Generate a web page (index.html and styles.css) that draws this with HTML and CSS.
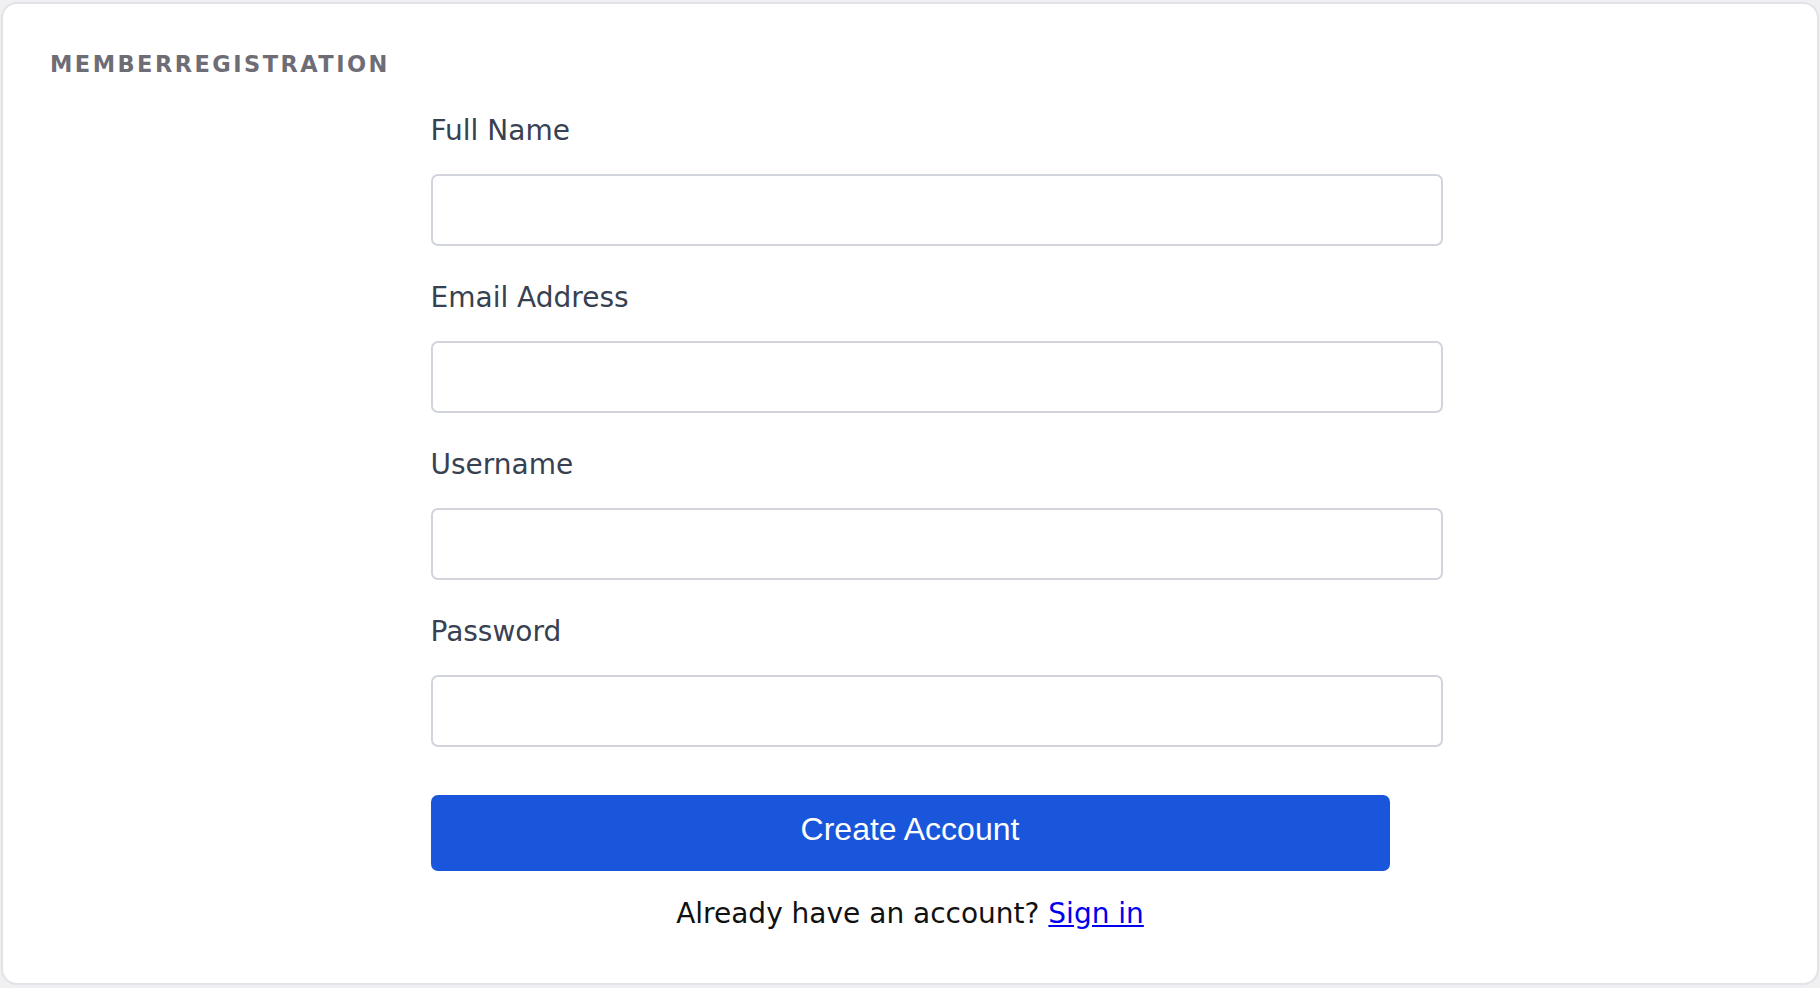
FILE: index.html
```html
<!DOCTYPE html>
<html lang="en">
<head>
    <meta charset="UTF-8">
    <meta name="viewport" content="width=device-width, initial-scale=1.0">
    <title>Member Registration</title>
    <link rel="stylesheet" href="styles.css">
</head>
<body>
    <div class="card">
        <h1 class="card-title">MemberRegistration</h1>
        <form class="register-form">
            <div class="field">
                <label for="fullname">Full Name</label>
                <input type="text" id="fullname">
            </div>
            <div class="field">
                <label for="email">Email Address</label>
                <input type="email" id="email">
            </div>
            <div class="field">
                <label for="username">Username</label>
                <input type="text" id="username">
            </div>
            <div class="field">
                <label for="password">Password</label>
                <input type="password" id="password">
            </div>
            <button type="button" class="submit">Create Account</button>
            <p class="signin">Already have an account? <a href="#">Sign in</a></p>
        </form>
    </div>
</body>
</html>
```

FILE: styles.css
```css
html, body {
    margin: 0;
    padding: 0;
}
body {
    background-color: #f0f0f3;
    font-family: "DejaVu Sans", sans-serif;
    padding: 2px 1px 3px;
}
.card {
    box-sizing: border-box;
    height: 983px;
    background-color: #fff;
    border: 2px solid #e2e2e7;
    border-radius: 16px;
    padding: 47px 47px 0;
}
.card-title {
    margin: 0 0 37px;
    font-size: 22.5px;
    font-weight: bold;
    letter-spacing: 2.45px;
    text-transform: uppercase;
    color: #6e6d76;
}
.register-form {
    width: 959px;
    margin: 0 auto;
}
.field {
    margin-bottom: 35px;
}
.field label {
    display: block;
    margin-bottom: 27px;
    font-size: 28px;
    color: #374151;
}
.field input {
    display: block;
    box-sizing: border-box;
    width: calc(100% + 53px);
    height: 72px;
    padding: 0 24px;
    font-size: 27px;
    font-family: "DejaVu Sans", sans-serif;
    border: 2px solid #d1d5db;
    border-radius: 7px;
    background-color: #fff;
}
.submit {
    display: block;
    width: 100%;
    margin-top: 48px;
    padding: 17px 0 24px;
    line-height: 35px;
    font-family: "Liberation Sans", Arial, sans-serif;
    font-size: 32px;
    color: #fff;
    background-color: #1a56db;
    border: none;
    border-radius: 7px;
    cursor: pointer;
}
.signin {
    margin: 25.5px 0 0;
    text-align: center;
    font-size: 28px;
    color: #111;
}
.signin a {
    color: #0000ee;
}
```
